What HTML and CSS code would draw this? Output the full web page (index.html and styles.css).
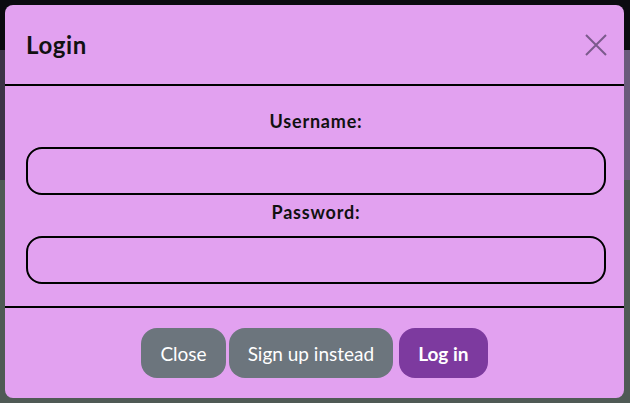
FILE: index.html
```html
<!DOCTYPE html>
<html>
<head>
<meta charset="utf-8">
<link rel="stylesheet" href="styles.css">
</head>
<body>
<div class="modal">
  <div class="modal-header">
    <h2 class="title">Login</h2>
    <button class="close-x" aria-label="Close">
      <svg width="22" height="22" viewBox="0 0 22 22"><path d="M1 1 L21 21 M21 1 L1 21" stroke="#7b5a8c" stroke-width="2" fill="none"/></svg>
    </button>
  </div>
  <div class="modal-body">
    <label class="label label-user">Username:</label>
    <input class="field" type="text">
    <label class="label label-pass">Password:</label>
    <input class="field" type="password">
  </div>
  <div class="modal-footer">
    <button class="btn btn-grey btn-close">Close</button>
    <button class="btn btn-grey btn-signup">Sign up instead</button>
    <button class="btn btn-purple">Log in</button>
  </div>
</div>
</body>
</html>
```
FILE: styles.css
```css
html, body {
  margin: 0;
  padding: 0;
  height: 403px;
  overflow: hidden;
}
body {
  font-family: Lato, "Noto Sans", sans-serif;
  background:
    linear-gradient(to bottom, #0b0a10 0, #0b0a10 50px, transparent 50px),
    linear-gradient(to right, #3c3347 0, #3c3347 315px, #6a5a7b 315px, #6a5a7b 630px);
  background-repeat: no-repeat;
  background-size: 630px 180px;
  background-color: #4f5a55;
  padding: 5px 6px 5px 5px;
  box-sizing: border-box;
}
.modal {
  background: #e2a1f0;
  border-radius: 8px;
  height: 393px;
  display: flex;
  flex-direction: column;
}
.modal-header {
  height: 79px;
  border-bottom: 2px solid #000;
  display: flex;
  align-items: center;
  justify-content: space-between;
  padding: 0 17px 0 21px;
}
.title {
  margin: 0;
  font-size: 24px;
  font-weight: 700;
  letter-spacing: 0.6px;
  color: #111;
}
.close-x {
  background: none;
  border: 0;
  padding: 0;
  width: 22px;
  height: 22px;
  display: flex;
}
.modal-body {
  display: flex;
  flex-direction: column;
  align-items: stretch;
  padding: 23px 18px 22px 21px;
  border-bottom: 2px solid #000;
}
.label {
  text-align: center;
  font-size: 18px;
  font-weight: 700;
  letter-spacing: 0.8px;
  line-height: 24px;
  color: #111;
}
.label-user { margin-bottom: 14px; }
.label-pass { margin-top: 5px; margin-bottom: 12px; }
.field {
  height: 48px;
  box-sizing: border-box;
  border: 2px solid #000;
  border-radius: 16px;
  background: transparent;
  outline: none;
  margin: 0;
}
.modal-footer {
  flex: 1;
  display: flex;
  justify-content: center;
  align-items: flex-start;
  padding-top: 20px;
}
.btn {
  height: 50px;
  border: 0;
  border-radius: 16px;
  color: #fff;
  font-family: Lato, "Noto Sans", sans-serif;
  font-size: 19px;
  padding: 0 19px;
}
.btn-grey { background: #6c757d; }
.btn-purple { background: #7d3a9f; font-weight: 700; }
.btn-close { margin-right: 3px; }
.btn-signup { margin-right: 6px; }
```
